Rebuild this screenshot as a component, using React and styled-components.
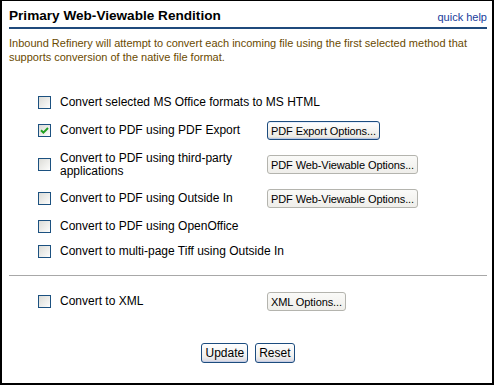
import React, { useState } from "react";
import styled, { createGlobalStyle } from "styled-components";

const GlobalStyle = createGlobalStyle`
  * { box-sizing: border-box; }
  body {
    margin: 0;
    background: #fff;
    font-family: "Liberation Sans", Arial, sans-serif;
  }
`;

const Panel = styled.div`
  width: 494px;
  height: 385px;
  border: 2px solid #000;
  border-top-width: 1px;
  padding: 7px 5px 0 7px;
  background: #fff;
`;

const Header = styled.div`
  display: flex;
  justify-content: space-between;
  align-items: flex-end;
  border-bottom: 2px solid #1f4a7c;
  padding-bottom: 3px;
`;

const Title = styled.h2`
  margin: 0;
  font-size: 13.6px;
  line-height: 16px;
  font-weight: bold;
  color: #000;
`;

const HelpLink = styled.a`
  font-size: 11px;
  line-height: 14px;
  color: #1a3c9c;
  text-decoration: none;
  cursor: pointer;
`;

const Intro = styled.p`
  margin: 7px 0 0;
  font-size: 11px;
  line-height: 14px;
  color: #6a4a00;
`;

const Options = styled.div`
  margin: ${(p) => (p.$top ? "26px" : "0")} 0 0 29px;
`;

const Row = styled.div`
  display: grid;
  grid-template-columns: 22px 207px auto;
  align-items: center;
  padding: 6px 0;
  min-height: 25px;
`;

const Label = styled.label`
  grid-column: ${(p) => (p.$wide ? "2 / span 2" : "2")};
  font-size: 12px;
  line-height: 12.5px;
  color: #000;
  cursor: pointer;
  padding-right: 10px;
`;

const Box = styled.span`
  display: flex;
  align-items: center;
  justify-content: center;
  width: 13px;
  height: 13px;
  border: 1px solid #1c5180;
  background: linear-gradient(135deg, #dcdcd7 0%, #f6f6f4 80%, #fff 100%);
  cursor: pointer;
`;

const Button = styled.button`
  justify-self: start;
  height: 19px;
  padding: 0 3px;
  font-family: "Liberation Sans", Arial, sans-serif;
  font-size: 11px;
  letter-spacing: -0.1px;
  color: #000;
  border-radius: 3px;
  border: 1px solid ${(p) => (p.$focused ? "#1c4c7e" : "#b4b4ae")};
  background: ${(p) =>
    p.$focused
      ? "linear-gradient(#ffffff, #ecebe6 85%, #d6d0c5)"
      : "linear-gradient(#fafaf8, #efeeea)"};
  box-shadow: ${(p) =>
    p.$focused ? "inset 0 -1px 0 #b8c8e8, inset 0 1px 0 #e6eefc" : "none"};
  cursor: pointer;
`;

const Divider = styled.hr`
  margin: 11px 0 10px;
  border: 0;
  border-top: 1px solid #a8a8a8;
`;

const Actions = styled.div`
  display: flex;
  justify-content: center;
  gap: 7px;
  margin-top: 26px;
`;

const ActionButton = styled.button`
  height: 20px;
  padding: 0 3px;
  font-family: "Liberation Sans", Arial, sans-serif;
  font-size: 12px;
  color: #000;
  border: 1px solid #1c4c7e;
  border-radius: 3px;
  background: linear-gradient(#ffffff, #f0f0ee 70%, #d8d6e0);
  box-shadow: inset 0 -1px 0 #c6cde4;
  cursor: pointer;
`;

function CheckBox({ checked, onClick }) {
  return (
    <Box onClick={onClick}>
      {checked && (
        <svg width="9" height="9" viewBox="0 0 9 9">
          <path
            d="M1 4.2 L3.4 6.6 L8 2"
            fill="none"
            stroke="#21a121"
            strokeWidth="2"
          />
        </svg>
      )}
    </Box>
  );
}

const OPTIONS = [
  { id: "html", label: "Convert selected MS Office formats to MS HTML" },
  { id: "pdfExport", label: "Convert to PDF using PDF Export", button: "PDF Export Options...", focused: true },
  { id: "thirdParty", label: "Convert to PDF using third-party applications", button: "PDF Web-Viewable Options..." },
  { id: "outsideIn", label: "Convert to PDF using Outside In", button: "PDF Web-Viewable Options..." },
  { id: "openOffice", label: "Convert to PDF using OpenOffice" },
  { id: "tiff", label: "Convert to multi-page Tiff using Outside In" },
];

function OptionRow({ option, checked, onToggle }) {
  return (
    <Row>
      <CheckBox checked={checked} onClick={onToggle} />
      <Label $wide={!option.button} onClick={onToggle}>
        {option.label}
      </Label>
      {option.button && <Button $focused={option.focused}>{option.button}</Button>}
    </Row>
  );
}

export default function App() {
  const [checked, setChecked] = useState({ pdfExport: true });

  const toggle = (id) => setChecked((c) => ({ ...c, [id]: !c[id] }));

  return (
    <>
      <GlobalStyle />
      <Panel>
        <Header>
          <Title>Primary Web-Viewable Rendition</Title>
          <HelpLink>quick help</HelpLink>
        </Header>
        <Intro>
          Inbound Refinery will attempt to convert each incoming file using the
          first selected method that supports conversion of the native file
          format.
        </Intro>
        <Options $top>
          {OPTIONS.map((o) => (
            <OptionRow
              key={o.id}
              option={o}
              checked={!!checked[o.id]}
              onToggle={() => toggle(o.id)}
            />
          ))}
        </Options>
        <Divider />
        <Options>
          <OptionRow
            option={{ id: "xml", label: "Convert to XML", button: "XML Options..." }}
            checked={!!checked.xml}
            onToggle={() => toggle("xml")}
          />
        </Options>
        <Actions>
          <ActionButton>Update</ActionButton>
          <ActionButton>Reset</ActionButton>
        </Actions>
      </Panel>
    </>
  );
}
